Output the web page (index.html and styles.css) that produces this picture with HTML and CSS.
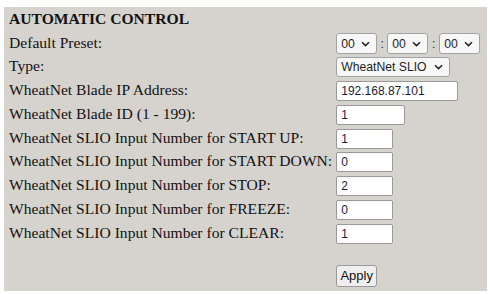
FILE: index.html
```html
<!DOCTYPE html>
<html lang="en">
<head>
    <meta charset="UTF-8">
    <title>Automatic Control</title>
    <link rel="stylesheet" href="styles.css">
</head>
<body>
    <form class="panel">
        <div class="heading">AUTOMATIC CONTROL</div>

        <label class="label">Default Preset:</label>
        <div class="control">
            <select class="sel sel-time"><option>00</option></select><span class="colon">:</span><select class="sel sel-time"><option>00</option></select><span class="colon">:</span><select class="sel sel-time"><option>00</option></select>
        </div>

        <label class="label">Type:</label>
        <div class="control">
            <select class="sel sel-type"><option>WheatNet SLIO</option></select>
        </div>

        <label class="label">WheatNet Blade IP Address:</label>
        <div class="control"><input type="text" class="field field-ip" value="192.168.87.101"></div>

        <label class="label">WheatNet Blade ID (1 - 199):</label>
        <div class="control"><input type="text" class="field field-id" value="1"></div>

        <label class="label">WheatNet SLIO Input Number for START UP:</label>
        <div class="control"><input type="text" class="field" value="1"></div>

        <label class="label">WheatNet SLIO Input Number for START DOWN:</label>
        <div class="control"><input type="text" class="field" value="0"></div>

        <label class="label">WheatNet SLIO Input Number for STOP:</label>
        <div class="control"><input type="text" class="field" value="2"></div>

        <label class="label">WheatNet SLIO Input Number for FREEZE:</label>
        <div class="control"><input type="text" class="field" value="0"></div>

        <label class="label">WheatNet SLIO Input Number for CLEAR:</label>
        <div class="control"><input type="text" class="field" value="1"></div>

        <div class="spacer"></div>

        <div class="label"></div>
        <div class="control"><button type="button" class="apply">Apply</button></div>
    </form>
</body>
</html>
```

FILE: styles.css
```css
body {
    margin: 7px 4px;
    background-color: white;
    font-family: "Liberation Serif", "Times New Roman", serif;
    font-size: 15.6px;
    color: #111;
}
.panel {
    width: 483px;
    height: 284px;
    box-sizing: border-box;
    background-color: #d6d3ce;
    padding: 0 5px;
    display: grid;
    grid-template-columns: max-content 1fr;
    grid-template-rows: repeat(10, 23.75px) 17px 26px;
    column-gap: 4px;
    align-items: center;
}
.heading {
    grid-column: 1 / span 2;
    font-weight: bold;
}
.label {
    white-space: nowrap;
}
.control {
    display: flex;
    align-items: center;
    padding-top: 2px;
}
.sel {
    appearance: none;
    -webkit-appearance: none;
    font-family: "Liberation Sans", Arial, sans-serif;
    font-size: 12.2px;
    height: 21px;
    box-sizing: border-box;
    padding: 0 0 0 4px;
    border: 1px solid #a3a3a3;
    border-radius: 3px;
    background-color: #f7f7f7;
    background-image: url("data:image/svg+xml,%3Csvg xmlns='http://www.w3.org/2000/svg' width='9' height='6' viewBox='0 0 9 6'%3E%3Cpath d='M1 1.2 L4.5 4.6 L8 1.2' fill='none' stroke='%23222' stroke-width='1.5'/%3E%3C/svg%3E");
    background-repeat: no-repeat;
    background-position: right 6px center;
    color: #1f1f1f;
}
.sel-time {
    width: 41px;
}
.sel-type {
    width: 114px;
    height: 20px;
}
.colon {
    width: 10px;
    text-align: center;
    font-family: "Liberation Sans", Arial, sans-serif;
    font-size: 12px;
    color: #222;
}
.colon + .sel-time + .colon {
    width: 11px;
}
.field {
    font-family: "Liberation Sans", Arial, sans-serif;
    font-size: 12px;
    width: 57px;
    height: 20px;
    box-sizing: border-box;
    padding: 1px 4px;
    border: 1px solid #999;
    border-radius: 2px;
    background-color: white;
    color: #1a1a3a;
}
.field-ip {
    width: 122px;
}
.field-id {
    width: 69px;
}
.spacer {
    grid-column: 1 / span 2;
}
.apply {
    font-family: "Liberation Sans", Arial, sans-serif;
    font-size: 13px;
    height: 22px;
    width: 41px;
    padding: 0;
    border: 1px solid #9a9a9a;
    border-radius: 3px;
    background-color: #efefef;
    color: #111;
}
```
